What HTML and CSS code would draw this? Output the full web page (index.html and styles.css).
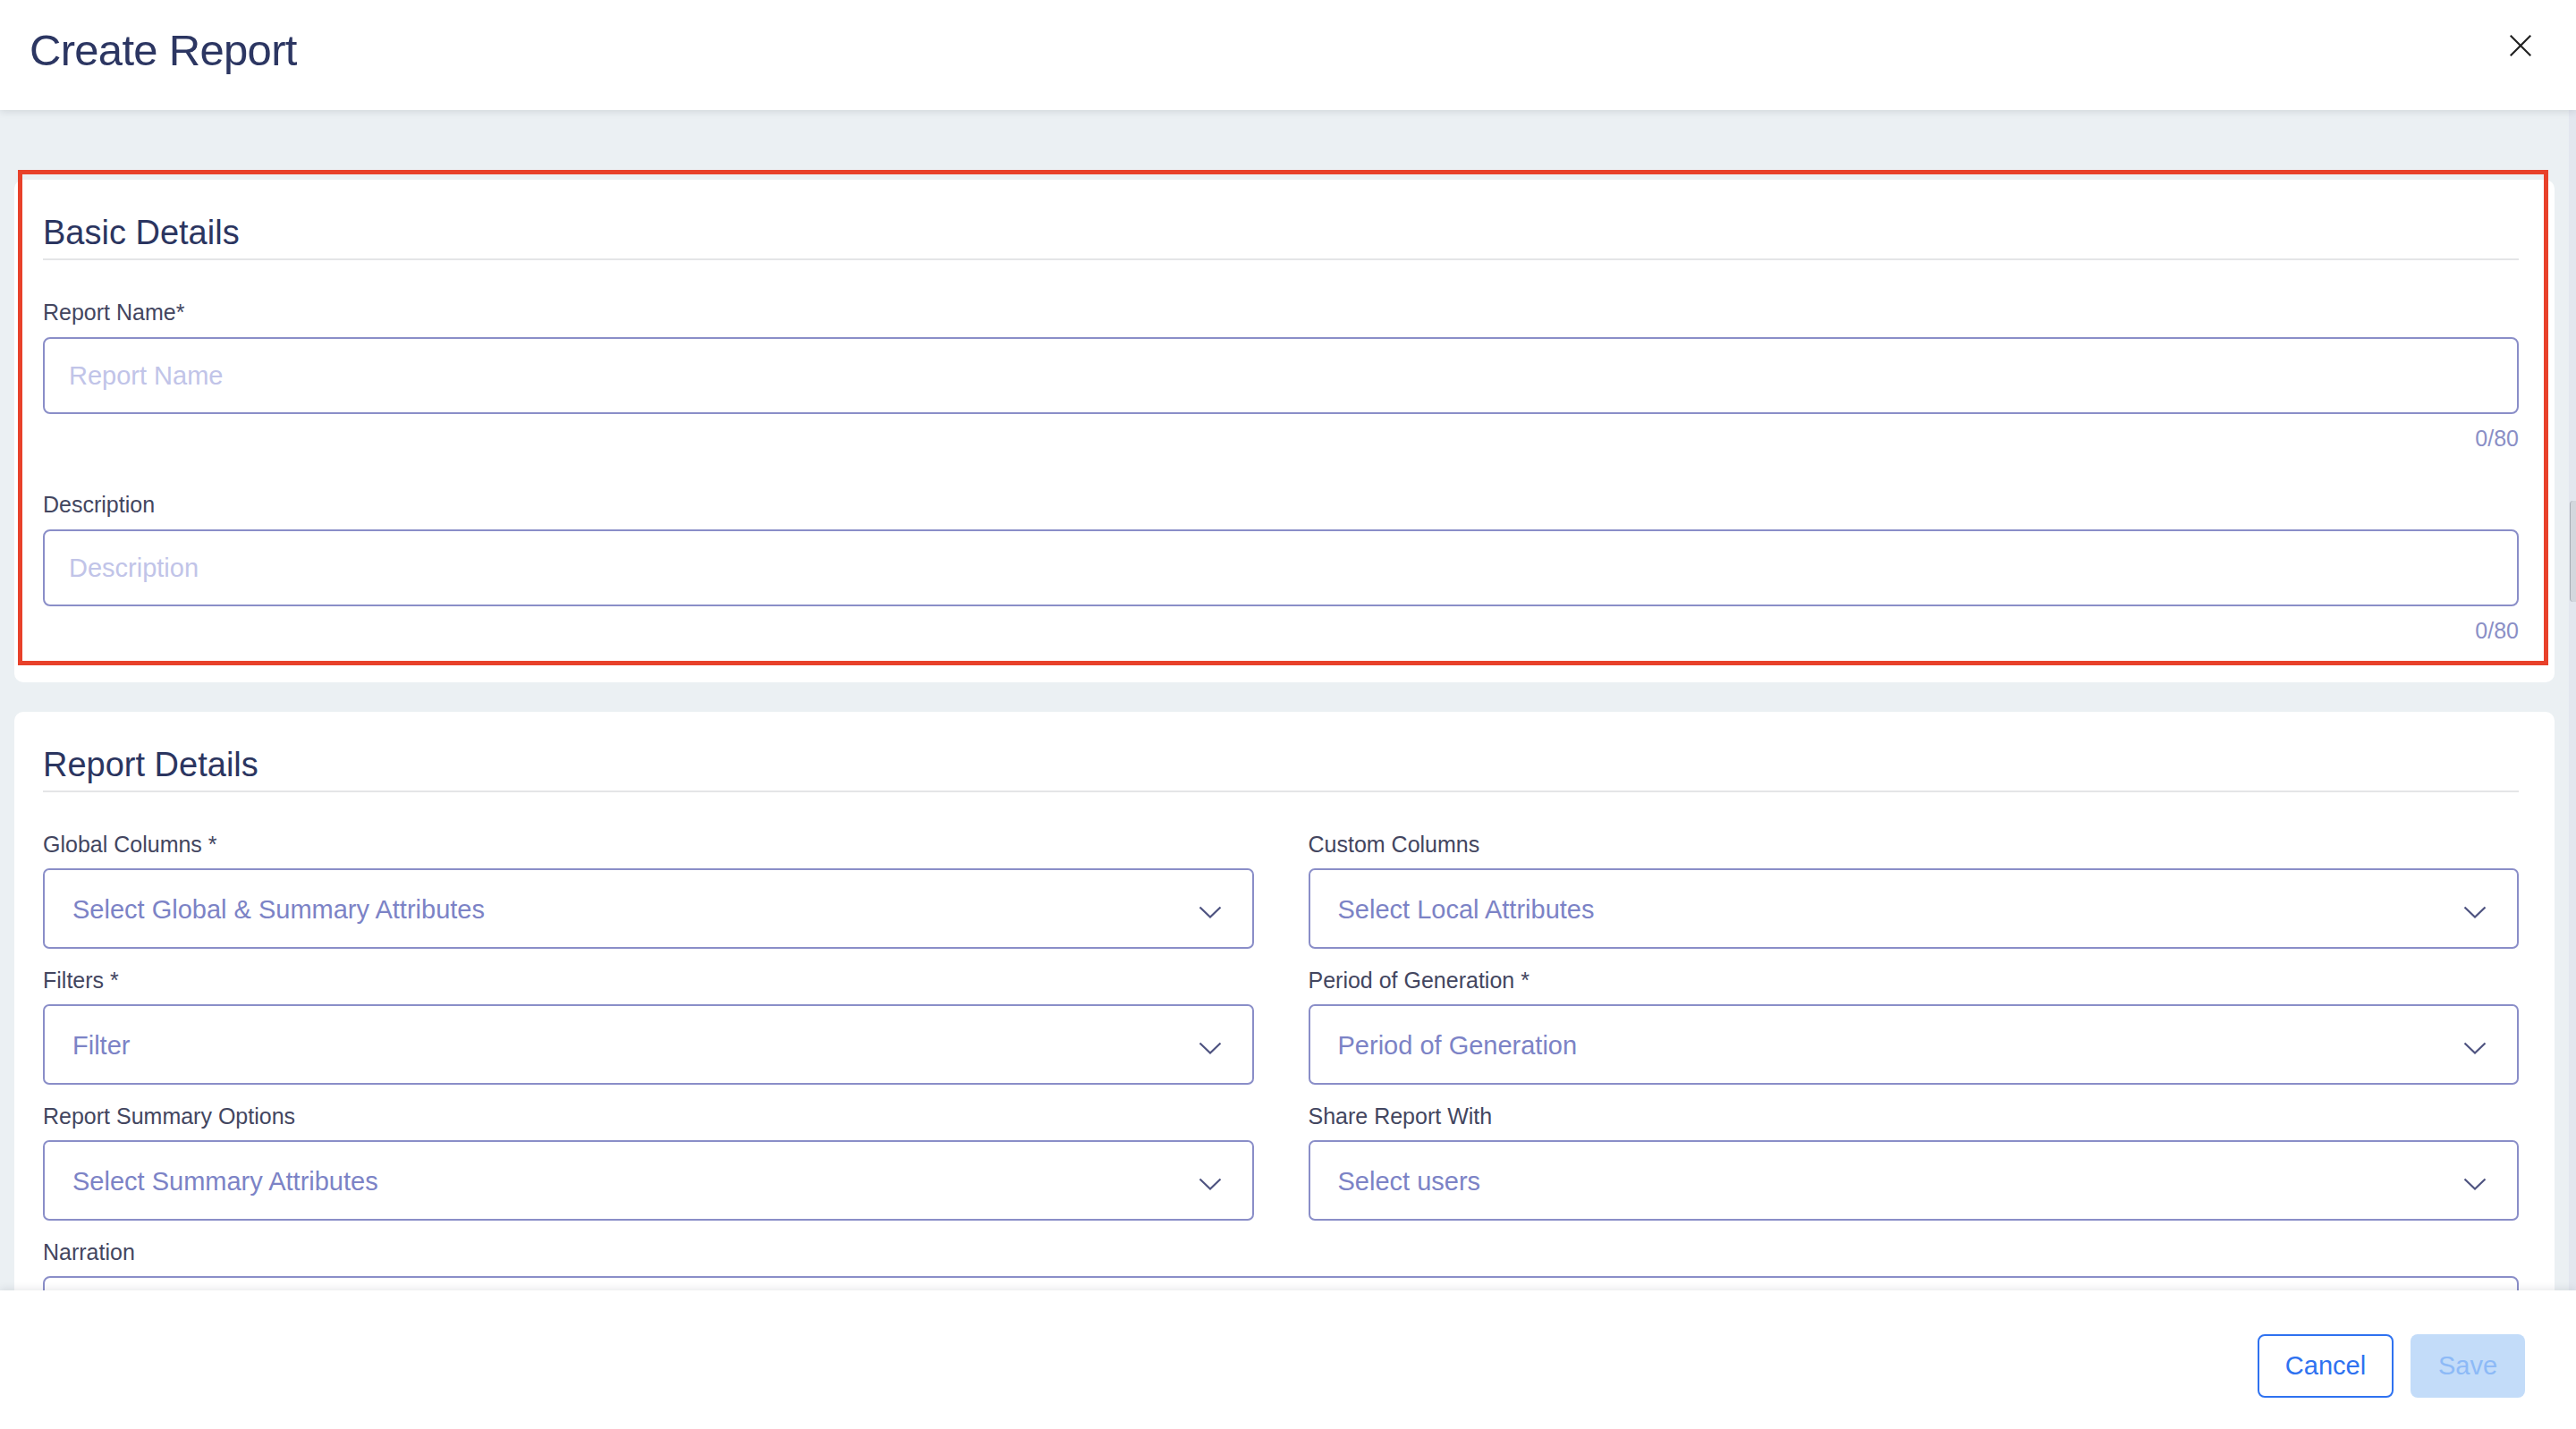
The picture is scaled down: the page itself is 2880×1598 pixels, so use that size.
FILE: index.html
```html
<!DOCTYPE html>
<html lang="en">
<head>
<meta charset="utf-8">
<title>Create Report</title>
<link rel="stylesheet" href="styles.css">
</head>
<body>
<div class="modal">
  <header class="modal-header">
    <h1 class="modal-title">Create Report</h1>
    <button class="close-btn" type="button" aria-label="Close">
      <svg width="24" height="24" viewBox="0 0 24 24"><path d="M1.5 1.5 L22.5 22.5 M22.5 1.5 L1.5 22.5" stroke="#222222" stroke-width="2.2" fill="none" stroke-linecap="square"/></svg>
    </button>
  </header>

  <main class="modal-body">
    <div class="scroll-area">
      <section class="card">
        <h2 class="card-title">Basic Details</h2>
        <div class="field field-first">
          <label class="field-label">Report Name*</label>
          <input class="text-input" type="text" placeholder="Report Name">
          <div class="counter">0/80</div>
        </div>
        <div class="field field-next">
          <label class="field-label">Description</label>
          <input class="text-input" type="text" placeholder="Description">
          <div class="counter">0/80</div>
        </div>
        <div class="annotation"></div>
      </section>

      <section class="card card-second">
        <h2 class="card-title">Report Details</h2>
        <div class="form-grid">
          <div class="field">
            <label class="field-label">Global Columns *</label>
            <div class="select">
              <span class="select-placeholder">Select Global &amp; Summary Attributes</span>
              <svg class="chevron" width="26" height="14" viewBox="0 0 26 14"><path d="M1.5 1.5 L13 12.5 L24.5 1.5" stroke="#4e5380" stroke-width="2.2" fill="none"/></svg>
            </div>
          </div>
          <div class="field">
            <label class="field-label">Custom Columns</label>
            <div class="select">
              <span class="select-placeholder">Select Local Attributes</span>
              <svg class="chevron" width="26" height="14" viewBox="0 0 26 14"><path d="M1.5 1.5 L13 12.5 L24.5 1.5" stroke="#4e5380" stroke-width="2.2" fill="none"/></svg>
            </div>
          </div>
          <div class="field">
            <label class="field-label">Filters *</label>
            <div class="select">
              <span class="select-placeholder">Filter</span>
              <svg class="chevron" width="26" height="14" viewBox="0 0 26 14"><path d="M1.5 1.5 L13 12.5 L24.5 1.5" stroke="#4e5380" stroke-width="2.2" fill="none"/></svg>
            </div>
          </div>
          <div class="field">
            <label class="field-label">Period of Generation *</label>
            <div class="select">
              <span class="select-placeholder">Period of Generation</span>
              <svg class="chevron" width="26" height="14" viewBox="0 0 26 14"><path d="M1.5 1.5 L13 12.5 L24.5 1.5" stroke="#4e5380" stroke-width="2.2" fill="none"/></svg>
            </div>
          </div>
          <div class="field">
            <label class="field-label">Report Summary Options</label>
            <div class="select">
              <span class="select-placeholder">Select Summary Attributes</span>
              <svg class="chevron" width="26" height="14" viewBox="0 0 26 14"><path d="M1.5 1.5 L13 12.5 L24.5 1.5" stroke="#4e5380" stroke-width="2.2" fill="none"/></svg>
            </div>
          </div>
          <div class="field">
            <label class="field-label">Share Report With</label>
            <div class="select">
              <span class="select-placeholder">Select users</span>
              <svg class="chevron" width="26" height="14" viewBox="0 0 26 14"><path d="M1.5 1.5 L13 12.5 L24.5 1.5" stroke="#4e5380" stroke-width="2.2" fill="none"/></svg>
            </div>
          </div>
        </div>
        <div class="field field-narration">
          <label class="field-label">Narration</label>
          <div class="textarea"></div>
        </div>
      </section>
    </div>
    <div class="scrollbar"><div class="scrollbar-thumb"></div></div>
  </main>

  <footer class="modal-footer">
    <button class="btn btn-outline" type="button">Cancel</button>
    <button class="btn btn-primary" type="button" disabled>Save</button>
  </footer>
</div>
</body>
</html>
```

FILE: styles.css
```css
* {
  box-sizing: border-box;
}

html, body {
  margin: 0;
  padding: 0;
}

body {
  width: 2880px;
  height: 1598px;
  overflow: hidden;
  font-family: "Liberation Sans", Arial, Helvetica, sans-serif;
  background: #ffffff;
}

.modal {
  display: flex;
  flex-direction: column;
  height: 1598px;
}

/* Header */
.modal-header {
  position: relative;
  z-index: 2;
  height: 123px;
  flex: 0 0 123px;
  display: flex;
  justify-content: space-between;
  align-items: flex-start;
  padding: 31px 50px 0 33px;
  background: #ffffff;
  box-shadow: 0 2px 8px rgba(30, 40, 60, 0.12);
}

.modal-title {
  margin: 0;
  font-size: 49px;
  line-height: 50px;
  font-weight: normal;
  letter-spacing: -0.7px;
  color: #2c3662;
}

.close-btn {
  margin-top: 8px;
  padding: 0;
  border: 0;
  background: none;
  width: 24px;
  height: 24px;
  display: block;
}

.close-btn svg {
  display: block;
}

/* Body */
.modal-body {
  flex: 0 0 1320px;
  height: 1320px;
  display: flex;
  background: #ebf0f3;
  overflow: hidden;
}

.scroll-area {
  flex: 1;
  padding: 78px 16px 0 16px;
  overflow: hidden;
}

.scrollbar {
  width: 8px;
  flex: 0 0 8px;
  background: #e3e7ef;
  padding-top: 437px;
}

.scrollbar-thumb {
  width: 7px;
  height: 113px;
  margin-left: 1px;
  border-radius: 4px 0 0 4px;
  background: #d3d7dd;
  border-left: 1px solid #a6abb3;
}

.card {
  position: relative;
  background: #ffffff;
  border-radius: 10px;
  padding: 41px 40px 46px 32px;
}

.card-second {
  margin-top: 33px;
}

.card-title {
  margin: 0;
  font-size: 38px;
  line-height: 37px;
  font-weight: normal;
  color: #2b3560;
  padding-bottom: 10px;
  border-bottom: 2px solid #e4e5e7;
}

.field {
  display: flex;
  flex-direction: column;
}

.field-first {
  margin-top: 46px;
}

.field-next {
  margin-top: 50px;
}

.field-label {
  font-size: 25px;
  line-height: 25px;
  color: #43465f;
}

.text-input {
  margin-top: 15px;
  width: 100%;
  height: 86px;
  border: 2px solid #8a8ec8;
  border-radius: 8px;
  padding: 0 27px;
  font-family: inherit;
  font-size: 29px;
  color: #2c3662;
  background: #ffffff;
  outline: none;
}

.text-input::placeholder {
  color: #c1c4e8;
  opacity: 1;
}

.counter {
  margin-top: 15px;
  font-size: 25px;
  line-height: 24px;
  text-align: right;
  color: #8a8fc6;
}

.annotation {
  position: absolute;
  top: -11px;
  left: 4px;
  right: 7px;
  bottom: 19px;
  border: 5px solid #e8412a;
  pointer-events: none;
}

/* Report details grid */
.form-grid {
  margin-top: 46px;
  display: grid;
  grid-template-columns: 1fr 1fr;
  column-gap: 61px;
  row-gap: 23px;
}

.select {
  margin-top: 14px;
  height: 90px;
  border: 2px solid #8a8ec8;
  border-radius: 7px;
  display: flex;
  align-items: center;
  justify-content: space-between;
  padding: 0 34px 0 31px;
  background: #ffffff;
}

.select-placeholder {
  font-size: 29px;
  line-height: 29px;
  color: #7c83c6;
  margin-top: 2px;
}

.chevron {
  display: block;
  margin-top: 8px;
}

.field-narration {
  margin-top: 23px;
}

.textarea {
  margin-top: 14px;
  height: 140px;
  border: 2px solid #8a8ec8;
  border-radius: 8px;
  background: #ffffff;
}

/* Footer */
.modal-footer {
  position: relative;
  z-index: 2;
  flex: 0 0 155px;
  height: 155px;
  display: flex;
  justify-content: flex-end;
  align-items: flex-start;
  gap: 19px;
  padding: 49px 57px 0 0;
  background: #ffffff;
  box-shadow: 0 -2px 8px rgba(30, 40, 60, 0.10);
}

.btn {
  height: 71px;
  border-radius: 8px;
  font-family: inherit;
  font-size: 29px;
  line-height: 29px;
  padding: 0;
  cursor: pointer;
}

.btn-outline {
  width: 152px;
  border: 2px solid #2f72f0;
  background: #ffffff;
  color: #2f72f0;
}

.btn-primary {
  width: 128px;
  border: 0;
  background: #c3dcf9;
  color: #8dbaf7;
}
```
